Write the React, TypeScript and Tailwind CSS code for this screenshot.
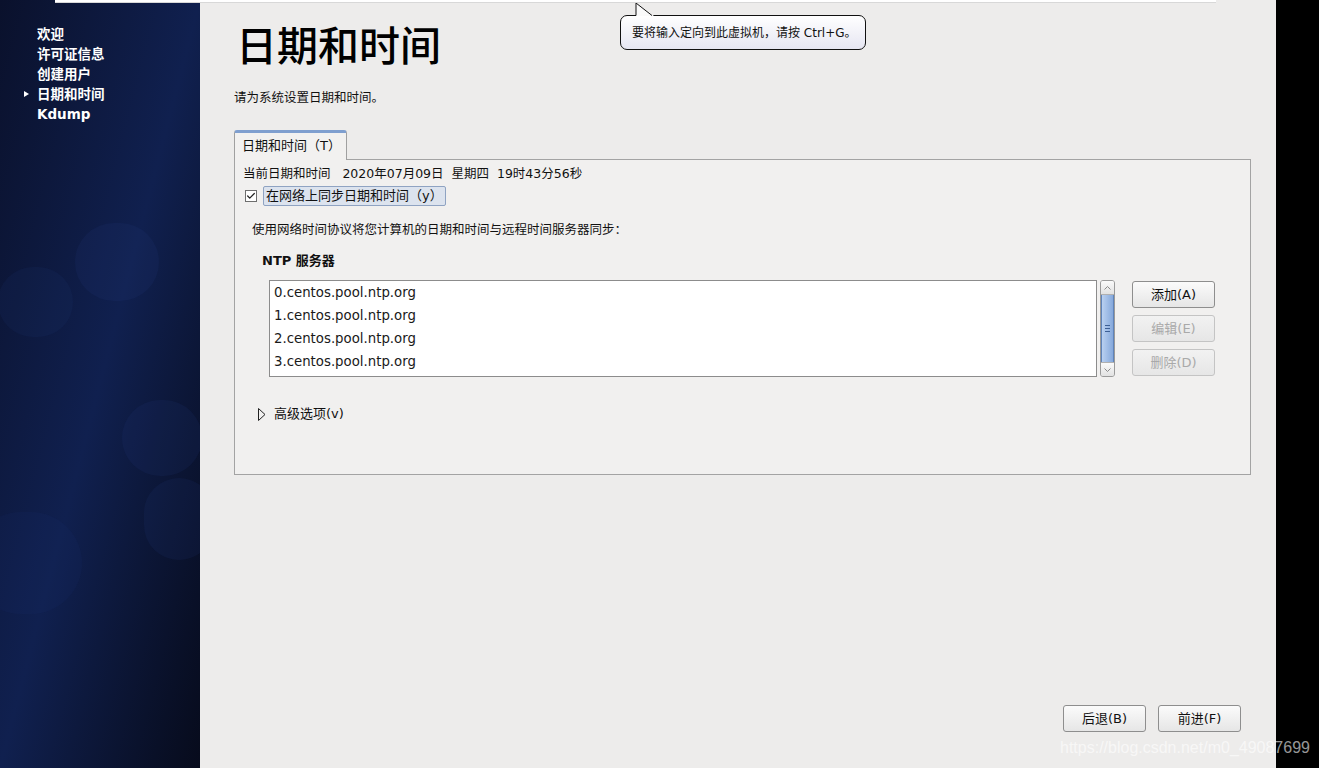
import { Check } from 'lucide-react'

// 安装向导：日期和时间页面

const CJK = "font-['DejaVu_Sans','Noto_Sans_CJK_SC',sans-serif]"

const steps = [
  { label: '欢迎' },
  { label: '许可证信息' },
  { label: '创建用户' },
  { label: '日期和时间', current: true },
  { label: 'Kdump' },
]

const servers = [
  '0.centos.pool.ntp.org',
  '1.centos.pool.ntp.org',
  '2.centos.pool.ntp.org',
  '3.centos.pool.ntp.org',
]

function GtkButton({ label, disabled }: { label: string; disabled?: boolean }) {
  return (
    <button
      className={
        'w-[83px] h-[27px] rounded-[3px] border text-[13px] leading-none bg-gradient-to-b ' +
        (disabled
          ? 'border-[#c4c4c4] from-[#f2f2f2] to-[#e6e6e6] text-[#a9a9a9]'
          : 'border-[#8e8e8e] from-[#fbfbfb] to-[#e6e6e6] text-[#111]')
      }
    >
      {label}
    </button>
  )
}

function Sidebar() {
  return (
    <aside className="relative w-[200px] h-full overflow-hidden bg-gradient-to-br from-[#0a112c] via-[#10204f] to-[#070b1c]">
      {/* 背景气泡 */}
      <div className="absolute left-[75px] top-[223px] w-[84px] h-[78px] rounded-full bg-[#2a4088] opacity-[0.12]" />
      <div className="absolute left-[-2px] top-[267px] w-[75px] h-[70px] rounded-full bg-[#2a4088] opacity-[0.1]" />
      <div className="absolute left-[122px] top-[400px] w-[80px] h-[76px] rounded-full bg-[#2a4088] opacity-[0.12]" />
      <div className="absolute left-[144px] top-[478px] w-[70px] h-[82px] rounded-full bg-[#2a4088] opacity-[0.12]" />
      <div className="absolute left-[-30px] top-[512px] w-[112px] h-[102px] rounded-full bg-[#2a4088] opacity-[0.08]" />

      <nav className={`relative pt-[24px] pl-[37px] flex flex-col ${CJK}`}>
        {steps.map((s) => (
          <div key={s.label} className="relative h-[20px] leading-[20px] text-[13.5px] font-bold text-white">
            {s.current && (
              <span className="absolute left-[-13px] top-[7px] w-0 h-0 border-y-[3px] border-y-transparent border-l-[5px] border-l-white" />
            )}
            {s.label}
          </div>
        ))}
      </nav>
    </aside>
  )
}

function Scrollbar() {
  return (
    <div className="w-[15px] h-[97px] flex flex-col rounded-[3px] border border-[#9a9a9a] bg-[#e9e9e9] overflow-hidden">
      <div className="h-[14px] flex items-center justify-center bg-gradient-to-b from-[#fafafa] to-[#e2e2e2] border-b border-[#b0b0b0]">
        <svg width="7" height="4" viewBox="0 0 7 4"><path d="M0.5 3.5 L3.5 0.5 L6.5 3.5" fill="none" stroke="#8a8a8a" /></svg>
      </div>
      <div className="flex-1 flex items-center justify-center bg-gradient-to-r from-[#b9d0f0] to-[#86a9dc] border-x border-[#5f84bb]">
        <div className="flex flex-col gap-[2px]">
          <div className="w-[5px] h-px bg-[#3d5f95]" />
          <div className="w-[5px] h-px bg-[#3d5f95]" />
          <div className="w-[5px] h-px bg-[#3d5f95]" />
        </div>
      </div>
      <div className="h-[14px] flex items-center justify-center bg-gradient-to-b from-[#fafafa] to-[#e2e2e2] border-t border-[#b0b0b0]">
        <svg width="7" height="4" viewBox="0 0 7 4"><path d="M0.5 0.5 L3.5 3.5 L6.5 0.5" fill="none" stroke="#8a8a8a" /></svg>
      </div>
    </div>
  )
}

function DateTimePanel() {
  return (
    <div className="flex flex-col">
      {/* 标签页 */}
      <div className="flex">
        <div className="w-[113px] h-[30px] -mb-px relative z-10 rounded-t-[3px] border border-[#a0a0a0] border-b-0 border-t-[3px] border-t-[#7f9fcf] bg-[#f2f1f0] pl-[7px] pt-[3px] text-[13px] text-[#111]">
          日期和时间（T）
        </div>
      </div>

      <div className="w-[1017px] h-[316px] border border-[#a3a3a3] bg-[#f1f0ef] pl-[8px] pt-[6px] text-[#111]">
        <div className="h-[16px] leading-[16px] text-[12.5px] whitespace-pre">
          当前日期和时间   2020年07月09日  星期四  19时43分56秒
        </div>

        <div className="mt-[4px] flex items-center h-[20px]">
          <div className="ml-[2px] w-[12px] h-[12px] border border-[#6e6e6e] bg-white flex items-center justify-center">
            <Check size={10} strokeWidth={3} className="text-[#222]" />
          </div>
          <div className="ml-[6px] h-[20px] px-[2px] leading-[18px] rounded-[2px] border border-[#8fa3c2] bg-[#dce3ee] text-[13px]">
            在网络上同步日期和时间（y）
          </div>
        </div>

        <div className="pl-[9px] mt-[16px] h-[16px] leading-[16px] text-[12.5px]">
          使用网络时间协议将您计算机的日期和时间与远程时间服务器同步：
        </div>

        <div className="pl-[19px] mt-[15px] h-[16px] leading-[16px] text-[13px] font-bold">
          NTP 服务器
        </div>

        <div className="pl-[26px] mt-[11px] flex items-start">
          <div className="w-[828px] h-[97px] border border-[#8c8c8c] bg-white pl-[4px]">
            {servers.map((s) => (
              <div key={s} className="h-[23px] leading-[23px] text-[13.3px] font-['DejaVu_Sans',sans-serif] text-[#1a1a1a]">
                {s}
              </div>
            ))}
          </div>
          <div className="ml-[3px]">
            <Scrollbar />
          </div>
          <div className="ml-[17px] mt-[1px] flex flex-col gap-[7px]">
            <GtkButton label="添加(A)" />
            <GtkButton label="编辑(E)" disabled />
            <GtkButton label="删除(D)" disabled />
          </div>
        </div>

        <div className="pl-[15px] mt-[29px] flex items-center h-[16px]">
          <svg width="8" height="13" viewBox="0 0 8 13">
            <path d="M0.5 0.5 L7 6.5 L0.5 12.5 Z" fill="none" stroke="#222" />
          </svg>
          <span className="ml-[8px] text-[13px] leading-[16px]">高级选项(v)</span>
        </div>
      </div>
    </div>
  )
}

export default function App() {
  return (
    <div className={`relative w-[1319px] h-[768px] flex overflow-hidden bg-black ${CJK}`}>
      <Sidebar />

      <main className="w-[1076px] h-full flex flex-col bg-[#edeceb] pl-[34px]">
        <h1 className="mt-[21px] pl-[2px] h-[44px] leading-[44px] text-[41px] text-black font-['Noto_Sans_CJK_SC',sans-serif] font-medium">
          日期和时间
        </h1>
        <p className="mt-[25px] h-[16px] leading-[16px] text-[12.5px] text-[#111]">
          请为系统设置日期和时间。
        </p>
        <div className="mt-[24px]">
          <DateTimePanel />
        </div>

        <div className="mt-auto mb-[36px] pr-[35px] flex justify-end gap-[12px]">
          <GtkButton label="后退(B)" />
          <GtkButton label="前进(F)" />
        </div>
      </main>

      {/* 顶部白条 */}
      <div className="absolute left-[55px] top-0 w-[1161px] h-[3px] bg-white border-b border-[#d8d8d8]" />

      {/* 提示气泡 */}
      <div className="absolute left-[620px] top-[3px]">
        <svg className="absolute left-[15px] top-0" width="20" height="14" viewBox="0 0 20 14">
          <path d="M1 0 L1 13 L19 13 Z" fill="#fafafa" />
          <path d="M1 0 L1 12.5 M1 0 L17 12.5" fill="none" stroke="#111" strokeWidth="1" />
        </svg>
        <div className="mt-[12px] w-[246px] h-[35px] rounded-[7px] border border-[#111] bg-gradient-to-b from-[#ffffff] to-[#e6e6f2] flex items-center pl-[11px] text-[12px] text-[#111]">
          要将输入定向到此虚拟机，请按 Ctrl+G。
        </div>
      </div>

      {/* 水印 */}
      <div className="absolute left-[1060px] top-[738px] text-[16px] leading-[20px] whitespace-nowrap text-white/60 font-['Liberation_Sans',sans-serif]">
        https://blog.csdn.net/m0_49087699
      </div>
    </div>
  )
}
